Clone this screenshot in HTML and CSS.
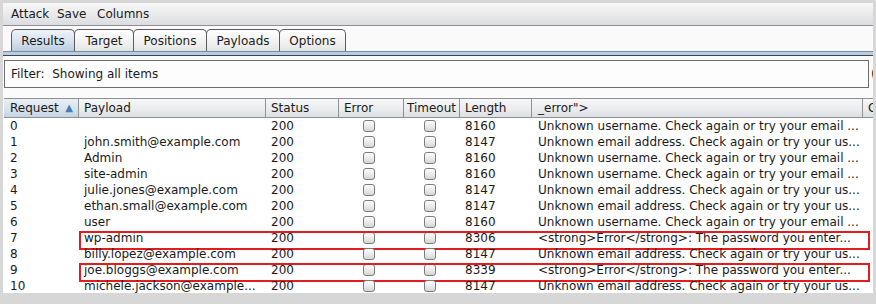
FILE: index.html
```html
<!DOCTYPE html>
<html>
<head>
<meta charset="utf-8">
<link rel="stylesheet" href="styles.css">
</head>
<body>
<div class="win">
  <div class="menubar"><span class="menu m1">Attack</span><span class="menu m2">Save</span><span class="menu">Columns</span></div>
  <div class="tabs">
    <div class="tab sel t1">Results</div>
    <div class="tab t2">Target</div>
    <div class="tab t3">Positions</div>
    <div class="tab t4">Payloads</div>
    <div class="tab t5">Options</div>
  </div>
  <div class="tabline"></div>
  <div class="panel">
    <div class="filter-row">
      <div class="filter">Filter:&nbsp; Showing all items</div>
      <span class="paren">(</span>
    </div>
    <div class="table">
      <div class="row head">
        <div class="cell sorted">Request <span class="arrow">▲</span></div>
        <div class="cell">Payload</div>
        <div class="cell">Status</div>
        <div class="cell">Error</div>
        <div class="cell tmo">Timeout</div>
        <div class="cell">Length</div>
        <div class="cell">_error"&gt;</div>
        <div class="cell">C</div>
      </div>
      <div class="row"><div class="cell">0</div><div class="cell"></div><div class="cell">200</div><div class="cell chk"><span class="cb"></span></div><div class="cell chk"><span class="cb"></span></div><div class="cell">8160</div><div class="cell">Unknown username. Check again or try your email ...</div><div class="cell"></div></div>
      <div class="row"><div class="cell">1</div><div class="cell">john.smith@example.com</div><div class="cell">200</div><div class="cell chk"><span class="cb"></span></div><div class="cell chk"><span class="cb"></span></div><div class="cell">8147</div><div class="cell">Unknown email address. Check again or try your us...</div><div class="cell"></div></div>
      <div class="row"><div class="cell">2</div><div class="cell">Admin</div><div class="cell">200</div><div class="cell chk"><span class="cb"></span></div><div class="cell chk"><span class="cb"></span></div><div class="cell">8160</div><div class="cell">Unknown username. Check again or try your email ...</div><div class="cell"></div></div>
      <div class="row"><div class="cell">3</div><div class="cell">site-admin</div><div class="cell">200</div><div class="cell chk"><span class="cb"></span></div><div class="cell chk"><span class="cb"></span></div><div class="cell">8160</div><div class="cell">Unknown username. Check again or try your email ...</div><div class="cell"></div></div>
      <div class="row"><div class="cell">4</div><div class="cell">julie.jones@example.com</div><div class="cell">200</div><div class="cell chk"><span class="cb"></span></div><div class="cell chk"><span class="cb"></span></div><div class="cell">8147</div><div class="cell">Unknown email address. Check again or try your us...</div><div class="cell"></div></div>
      <div class="row"><div class="cell">5</div><div class="cell">ethan.small@example.com</div><div class="cell">200</div><div class="cell chk"><span class="cb"></span></div><div class="cell chk"><span class="cb"></span></div><div class="cell">8147</div><div class="cell">Unknown email address. Check again or try your us...</div><div class="cell"></div></div>
      <div class="row"><div class="cell">6</div><div class="cell">user</div><div class="cell">200</div><div class="cell chk"><span class="cb"></span></div><div class="cell chk"><span class="cb"></span></div><div class="cell">8160</div><div class="cell">Unknown username. Check again or try your email ...</div><div class="cell"></div></div>
      <div class="row hl"><div class="cell">7</div><div class="cell">wp-admin</div><div class="cell">200</div><div class="cell chk"><span class="cb"></span></div><div class="cell chk"><span class="cb"></span></div><div class="cell">8306</div><div class="cell">&lt;strong&gt;Error&lt;/strong&gt;: The password you enter...</div><div class="cell"></div></div>
      <div class="row"><div class="cell">8</div><div class="cell">billy.lopez@example.com</div><div class="cell">200</div><div class="cell chk"><span class="cb"></span></div><div class="cell chk"><span class="cb"></span></div><div class="cell">8147</div><div class="cell">Unknown email address. Check again or try your us...</div><div class="cell"></div></div>
      <div class="row hl"><div class="cell">9</div><div class="cell">joe.bloggs@example.com</div><div class="cell">200</div><div class="cell chk"><span class="cb"></span></div><div class="cell chk"><span class="cb"></span></div><div class="cell">8339</div><div class="cell">&lt;strong&gt;Error&lt;/strong&gt;: The password you enter...</div><div class="cell"></div></div>
      <div class="row"><div class="cell">10</div><div class="cell">michele.jackson@example...</div><div class="cell">200</div><div class="cell chk"><span class="cb"></span></div><div class="cell chk"><span class="cb"></span></div><div class="cell">8147</div><div class="cell">Unknown email address. Check again or try your us...</div><div class="cell"></div></div>
    </div>
  </div>
</div>
</body>
</html>
```

FILE: styles.css
```css
* { box-sizing: border-box; }
html, body { margin: 0; }
body {
  width: 876px;
  height: 304px;
  overflow: hidden;
  background: #d7d7d7;
  padding: 3px 3px 0 3px;
  font-family: "DejaVu Sans", sans-serif;
  font-size: 12px;
  color: #1a1a1a;
}
.win {
  width: 870px;
  height: 290px;
  background: #fafafa;
  overflow: hidden;
}
.menubar {
  height: 23px;
  border-bottom: 1px solid #8d9096;
  background: linear-gradient(#f7f7f7, #e9e9ea 55%, #dcdde0);
  display: flex;
  align-items: center;
  padding-left: 8px;
}
.menu { display: inline-block; }
.m1 { width: 46px; }
.m2 { width: 40px; }
.tabs {
  height: 25px;
  display: flex;
  align-items: flex-end;
  padding-left: 8px;
  background: #fafafa;
}
.tab {
  height: 22px;
  display: flex;
  align-items: center;
  justify-content: center;
  border: 1px solid #5c5c5c;
  border-bottom: none;
  border-radius: 5px 5px 0 0;
  background: linear-gradient(#fefefe, #f1f1f1 60%, #e4e4e4);
  margin-right: -1px;
}
.t1 { width: 64px; }
.t2 { width: 60px; }
.t3 { width: 74px; }
.t4 { width: 74px; }
.t5 { width: 67px; }
.tab.sel {
  background: linear-gradient(#eef3f8, #d3e0ec 60%, #b9cde1);
}
.tabline {
  height: 5px;
  border-top: 1px solid #7f8a98;
  border-bottom: 1px solid #3e4450;
  background: #b9cde2;
}
.panel {
  padding: 4px 0 0 1px;
  background: #fbfbfb;
  height: 234px;
}
.filter-row {
  display: flex;
  align-items: center;
  height: 28px;
  overflow: hidden;
}
.filter {
  width: 865px;
  flex: none;
  height: 28px;
  border: 1px solid #6e6e6e;
  background: #fdfdfd;
  display: flex;
  align-items: center;
  padding-left: 6px;
}
.paren { margin-left: 2px; flex: none; }
.table {
  margin-top: 10px;
  background: #fff;
  overflow: hidden;
}
.row {
  position: relative;
  display: grid;
  grid-template-columns: 75px 187px 73px 65px 56px 72px 331px 20px;
  height: 16px;
  align-items: center;
  white-space: nowrap;
}
.cell {
  padding-left: 6px;
  overflow: hidden;
  line-height: 16px;
}
.row .cell:nth-child(n+2) { padding-left: 5px; }
.row .cell:nth-child(7) { padding-left: 6px; }
.head {
  height: 20px;
  border-top: 1px solid #8f9195;
  border-bottom: 1px solid #8f9195;
  background: linear-gradient(#f6f7f8, #e9ebed 60%, #dcdfe3);
  align-items: stretch;
}
.head .cell {
  border-right: 1px solid #8f9195;
  line-height: 18px;
}
.head .cell.tmo { padding-left: 3px; }
.head .cell.sorted {
  background: linear-gradient(#e9eff5, #d6e1ec 60%, #c4d4e4);
  display: flex;
  justify-content: space-between;
  padding-right: 5px;
}
.arrow { color: #4a7db6; font-size: 10px; }
.cell.chk {
  display: flex;
  justify-content: center;
  align-items: center;
  padding-left: 0 !important;
  padding-right: 5px;
  height: 16px;
}
.cb {
  width: 12px;
  height: 12px;
  border: 1px solid #7b7b7b;
  border-radius: 3px;
  background: linear-gradient(#fdfdfd, #e6e7e8 60%, #d4d5d8);
}
.hl::after {
  content: "";
  position: absolute;
  left: 75px;
  width: 787px;
  top: 1px;
  height: 15px;
  border: 2px solid #e41b1f;
}
```
